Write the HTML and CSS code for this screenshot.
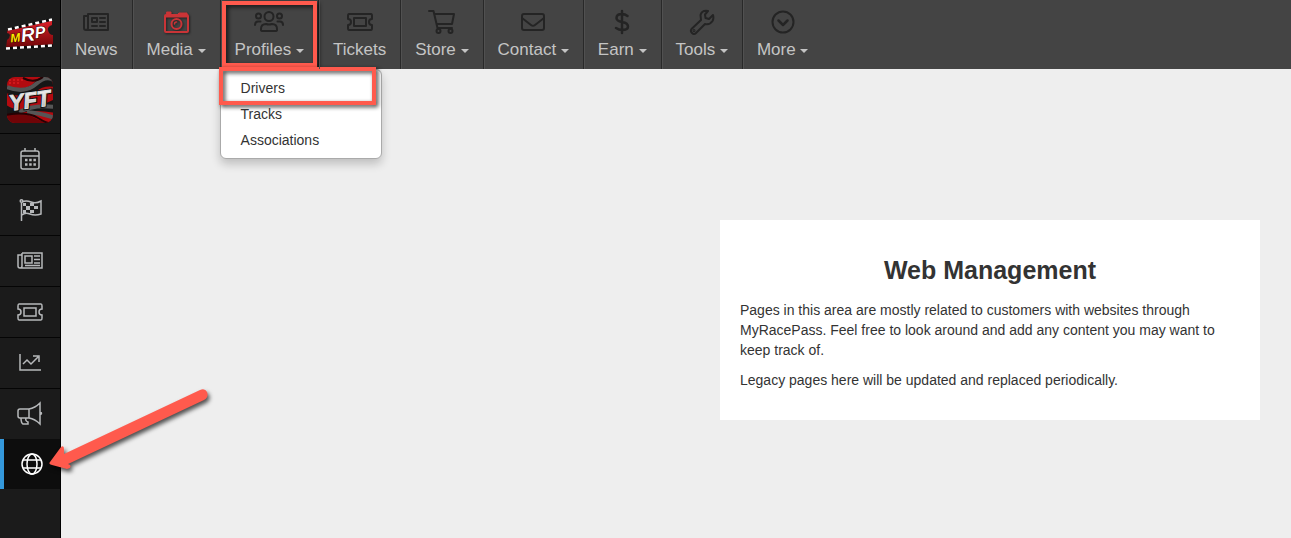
FILE: index.html
```html
<!DOCTYPE html>
<html lang="en">
<head>
<meta charset="utf-8">
<meta name="viewport" content="width=device-width, initial-scale=1">
<title>Web Management</title>
<link rel="stylesheet" href="styles.css">
</head>
<body>
<aside class="sidebar">
  <a class="brand" href="#" aria-label="MRP">
    <svg width="50" height="50" viewBox="0 0 50 50">
      <defs><linearGradient id="ticket" x1="0" y1="0" x2="0" y2="1"><stop offset="0" stop-color="#e3222b"/><stop offset="1" stop-color="#6d0507"/></linearGradient></defs>
      <path d="M3 21 47 11V17Q42 19 43 22 44 27 48 27L48 37 1 40 2 32Q5 30 5 27 4 25 2 25Z" fill="url(#ticket)"/>
      <path d="M3 21.500 47 11.500M1 40.500 48 37.500" fill="none" stroke="#0a0a0a" stroke-width="2.500"/>
      <path d="M3 21.500 47 11.500M1 40.500 48 37.500" fill="none" stroke="#fff" stroke-width="2.500" stroke-dasharray="4 3"/>
      <g transform="rotate(-7 25 27)" font-style="italic" font-weight="bold" stroke="#300" stroke-width="1" paint-order="stroke"><text x="5" y="32" font-size="12" fill="#ffe600">M</text><text x="16" y="33" font-size="19" fill="#fff">R</text><text x="30" y="31" font-size="16" fill="#fff">P</text></g>
    </svg>
  </a>
  <a class="brand" href="#" aria-label="YFT">
    <svg width="50" height="50" viewBox="0 0 50 50">
      <defs><clipPath id="tile"><rect x="2" y="2" width="46" height="46" rx="8"/></clipPath><linearGradient id="steel" x1="0" y1="0" x2="0" y2="1"><stop offset="0" stop-color="#fff"/><stop offset="1" stop-color="#aaa"/></linearGradient></defs>
      <g clip-path="url(#tile)"><path d="M0 0H50V50H0Z" fill="#b30b10"/>
      <path d="M0 36Q18 36 30 43T50 45V50H0Z" fill="#700407"/>
      <path d="M0 10Q20 18 30 7T50 3V12Q38 10 31 17T0 18Z" fill="#161616"/>
      <path d="M2 12Q20 19 31 9T50 6" fill="none" stroke="#555" stroke-width="4"/>
      <path d="M0 29Q15 42 50 24V38Q30 34 15 38T0 36Z" fill="#161616"/>
      <path d="M14 37Q29 29 50 32M22 37Q35 38 50 43" fill="none" stroke="#565656" stroke-width="4"/>
      <path d="M0 40Q22 36 33 43T50 48M18 3Q29 9 38 2" fill="none" stroke="#240204" stroke-width="2"/>
      <path d="M4 5H20M4 8H15" stroke="#ef2424" stroke-width="1" stroke-dasharray="2 2"/></g>
      <text x="4" y="33" transform="rotate(-8 25 27)" font-size="22" font-weight="bold" font-style="italic"><tspan fill="none" stroke="#111" stroke-width="3">YFT</tspan></text>
      <text x="4" y="33" transform="rotate(-8 25 27)" font-size="22" font-weight="bold" font-style="italic" fill="url(#steel)" stroke="#ddd" stroke-width="1" aria-hidden="true">YFT</text>
    </svg>
  </a>
  <nav class="tools" aria-label="Sections">
    <a class="tool" href="#" aria-label="Calendar"><svg width="28" height="28" viewBox="0 0 28 28"><rect x="5" y="6" width="18" height="18" rx="2"/><path d="M5 11H23M9 3V6M19 3V6"/><path d="M9 15H20M9 19.500H20" stroke-width="2.500" stroke-dasharray="2.500 1.700"/></svg></a>
    <a class="tool" href="#" aria-label="Races"><svg width="28" height="28" viewBox="0 0 28 28"><circle cx="5.500" cy="5" r="1.300"/><path d="M5.500 7V25M6 6Q10 4 15 6T25 5V18Q19 20 14 18T6 19"/><path d="M7 7H10V10H7ZM14 7H18V10H14ZM10 10H14V14H10ZM18 10H22V13H18ZM7 14H10V17H7ZM14 14H18V17H14Z" fill="#b7b9bb" stroke="none"/></svg></a>
    <a class="tool" href="#" aria-label="News"><svg width="28" height="28" viewBox="0 0 28 28"><path d="M6 6H26V21H4Q2 21 2 19V8H6M6 6V19Q6 21 4 21M9 9H16V16H9ZM18 9H24M18 12.500H24M18 16H24M9 18.500H24"/></svg></a>
    <a class="tool" href="#" aria-label="Tickets"><svg width="28" height="28" viewBox="0 0 28 28"><path d="M3 6H25Q26 6 26 8V11Q23 11 23 14T26 17V20Q26 22 25 22H3Q2 22 2 20V17Q5 17 5 14T2 11V8Q2 6 3 6ZM8 10H20V18H8Z"/></svg></a>
    <a class="tool" href="#" aria-label="Statistics"><svg width="28" height="28" viewBox="0 0 28 28"><path d="M4 5V21H25M7 15 11 11 15 15 22 8M17 7H23V13"/></svg></a>
    <a class="tool" href="#" aria-label="Announcements"><svg width="28" height="28" viewBox="0 0 28 28"><path d="M4 9H13V18H4Q2 18 2 16V11Q2 9 4 9ZM13 9Q19 8 24 3V24Q19 19 13 18M5 18Q5 23 7 24H12V22Q9 21 10 18M24 12Q27 13 24 15"/></svg></a>
    <a class="tool tool-active" href="#" aria-label="Web management" aria-current="page"><svg width="28" height="28" viewBox="0 0 28 28"><circle cx="14" cy="14" r="10"/><ellipse cx="14" cy="14" rx="5" ry="10"/><path d="M5 10H23M5 18H23"/></svg>
      <svg class="pointer" width="170" height="90" viewBox="0 0 170 90"><path d="M6 73 17 58Q20 56 20 60V65L156 1Q161-1 163 3 165 8 160 11L24 75 26 76Q28 79 23 80L8 76Q4 75 6 73Z"/></svg>
    </a>
  </nav>
</aside>
<div class="page">
  <nav class="topnav" aria-label="Main">
    <ul class="menu">
      <li class="item"><a class="link" href="#"><svg class="icon" width="28" height="26" viewBox="0 0 28 26"><path d="M6 5H26V21H4Q2 21 2 19V7H6M6 5V19Q6 21 4 21M10 9H15V13H10ZM18 9H23M18 13H23M10 17H15M18 17H23"/></svg><span>News</span></a></li>
      <li class="item"><a class="link" href="#"><svg class="icon icon-media" width="28" height="26" viewBox="0 0 28 26"><rect x="3" y="6" width="23" height="17" rx="1"/><path d="M3 7H14L17 4H25V8H3ZM5 3H9V5H5Z" fill="#c93437" stroke-width="1"/><circle cx="14.500" cy="15" r="5"/><path d="M12.500 15Q12.500 13 14.500 13" stroke-width="1.500"/></svg><span class="label">Media <i class="caret"></i></span></a></li>
      <li class="item"><a class="link" href="#" aria-expanded="true"><svg class="icon" width="32" height="26" viewBox="0 0 32 26"><circle cx="16" cy="7.500" r="4.500"/><circle cx="5.500" cy="7" r="2.500"/><circle cx="26.500" cy="7" r="2.500"/><path d="M8 21V20Q8 15 13 15 16 16 19 15 24 15 24 20V21Q24 22 22 22H10Q8 22 8 21ZM2 16Q2 12.500 5 12.500H7.500M30 16Q30 12.500 27 12.500H24.500"/></svg><span class="label">Profiles <i class="caret"></i></span></a>
        <span class="mark mark-profiles"></span>
        <ul class="dropdown">
          <li class="option"><a href="#">Drivers</a><span class="mark mark-drivers"></span></li>
          <li class="option"><a href="#">Tracks</a></li>
          <li class="option"><a href="#">Associations</a></li>
        </ul>
      </li>
      <li class="item"><a class="link" href="#"><svg class="icon" width="28" height="26" viewBox="0 0 28 26"><path d="M3 5H25Q26 5 26 7V10Q23 10 23 13T26 16V19Q26 21 25 21H3Q2 21 2 19V16Q5 16 5 13T2 10V7Q2 5 3 5ZM8 9H20V17H8Z"/></svg><span>Tickets</span></a></li>
      <li class="item"><a class="link" href="#"><svg class="icon" width="28" height="26" viewBox="0 0 28 26"><path d="M1 2H5.500L9.500 19H24M6.500 5H26L24 15H8.500"/><circle cx="10.500" cy="22" r="2"/><circle cx="22.500" cy="22" r="2"/></svg><span class="label">Store <i class="caret"></i></span></a></li>
      <li class="item"><a class="link" href="#"><svg class="icon" width="28" height="26" viewBox="0 0 28 26"><rect x="3" y="5" width="22" height="16" rx="2"/><path d="M3 9 12 16Q14 17.500 16 16L25 9"/></svg><span class="label">Contact <i class="caret"></i></span></a></li>
      <li class="item"><a class="link" href="#"><svg class="icon" width="28" height="26" viewBox="0 0 28 26"><path d="M14 2V24M19.500 7Q17 5 14 5 8.500 5 8.500 9 8.500 12 14 13 20 14 20 17.500 20 21 14 21 11 21 8 19" stroke-width="2.500"/></svg><span class="label">Earn <i class="caret"></i></span></a></li>
      <li class="item"><a class="link" href="#"><svg class="icon" width="28" height="26" viewBox="0 0 28 26"><path d="M20 2Q14 1 12.500 6L13 11 3.500 20Q2 22 4 24T8 24L17 15Q22 16 24.500 12 26 9 25 6L21 10 17.500 9 17 5.500Z"/><circle cx="6" cy="21.500" r=".5"/></svg><span class="label">Tools <i class="caret"></i></span></a></li>
      <li class="item item-last"><a class="link" href="#"><svg class="icon" width="28" height="26" viewBox="0 0 28 26"><circle cx="14" cy="13" r="10.500"/><path d="M9.500 11.500 14 16 18.500 11.500" stroke-width="2.500"/></svg><span class="label">More <i class="caret"></i></span></a></li>
    </ul>
  </nav>
  <main class="content">
    <section class="card">
      <h1 class="title">Web Management</h1>
      <p class="text">Pages in this area are mostly related to customers with websites through MyRacePass. Feel free to look around and add any content you may want to keep track of.</p>
      <p class="text">Legacy pages here will be updated and replaced periodically.</p>
    </section>
  </main>
</div>
</body>
</html>
```
FILE: styles.css
```css
* { box-sizing: border-box; }
body {
  display: flex;
  min-height: 100vh;
  margin: 0;
  background: #eee;
  color: #333;
  font: 14px/20px "Liberation Sans", Arial, sans-serif;
}
a { color: inherit; text-decoration: none; }
ul { list-style: none; margin: 0; padding: 0; }

.sidebar {
  position: relative;
  z-index: 2;
  flex: 0 0 61px;
  background: #1b1b1b;
  border-right: 1px solid #000;
}
.brand, .tool {
  display: flex;
  align-items: center;
  justify-content: center;
  border-bottom: 1px solid #050505;
}
.brand { height: 67px; }
.tool {
  position: relative;
  height: 51px;
  fill: none;
  stroke: #b7b9bb;
  stroke-width: 1.5;
}
.tool-active {
  margin-top: -1px;
  background: #0d0d0d;
  border-bottom: 0;
  border-left: 4px solid #3498db;
  height: 50px;
  stroke: #fff;
}
.pointer {
  position: absolute;
  left: 40px;
  top: -50px;
  overflow: visible;
  fill: #ff5a4d;
  stroke: none;
  filter: drop-shadow(2px 3px 2px #000a);
}

.page { flex: 1; min-width: 0; }
.topnav { position: relative; z-index: 1; background: #444; }
.menu { display: flex; }
.item {
  position: relative;
  border-right: 1px solid #292929;
  box-shadow: inset 1px 0 #515151;
}
.item-last { border-right: 0; }
.link {
  display: flex;
  flex-direction: column;
  align-items: center;
  gap: 1px;
  height: 69px;
  padding: 9px 14px;
  color: #c4c4c4;
  font-size: 17px;
  line-height: 28px;
  white-space: nowrap;
}
.icon {
  flex: none;
  fill: none;
  stroke: #242424;
  stroke-width: 2;
  stroke-linejoin: round;
  stroke-linecap: round;
}
.icon-media { stroke: #c93437; filter: drop-shadow(1px 1px 1px #0008); }
.caret {
  display: inline-block;
  vertical-align: middle;
  border-top: 4px solid;
  border-right: 4px solid transparent;
  border-left: 4px solid transparent;
}

.dropdown {
  position: absolute;
  top: 100%;
  left: -1px;
  width: 162px;
  padding: 5px 0;
  background: #fff;
  border: 1px solid #aaa;
  border-radius: 6px;
  box-shadow: 0 5px 10px #0003;
}
.option { position: relative; }
.option a { display: block; padding: 3px 20px; }
.mark {
  position: absolute;
  border: 4px solid #ff5a4d;
  filter: drop-shadow(2px 2px 2px #000b);
  pointer-events: none;
}
.mark-profiles { inset: 1px 1px 2px 1px; }
.mark-drivers { inset: -8px 5px -4px -2px; }

.content { padding: 151px 31px 31px; }
.card {
  max-width: 540px;
  margin-left: auto;
  padding: 20px;
  background: #fff;
}
.title {
  margin: 10px 0;
  font-size: 25px;
  line-height: 40px;
  text-align: center;
}
.text { margin: 0 0 10px; }
```
